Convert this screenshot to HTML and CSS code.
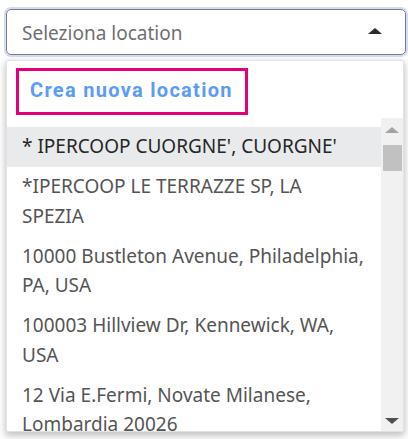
FILE: index.html
```html
<!DOCTYPE html>
<html lang="it">
<head>
  <meta charset="UTF-8" />
  <meta name="viewport" content="width=device-width, initial-scale=1.0" />
  <title>Seleziona location</title>
  <link rel="stylesheet" href="styles.css">
</head>
<body>
  <div class="picker">
    <div class="select">
      <span class="placeholder">Seleziona location</span>
      <span class="caret"></span>
    </div>

    <div class="dropdown">
      <div class="dropdown-head">
        <a class="create-link" href="#">Crea nuova location</a>
      </div>
      <div class="dropdown-body">
        <ul class="options">
          <li class="active">* IPERCOOP CUORGNE', CUORGNE'</li>
          <li>*IPERCOOP LE TERRAZZE SP, LA SPEZIA</li>
          <li>10000 Bustleton Avenue, Philadelphia, PA, USA</li>
          <li>100003 Hillview Dr, Kennewick, WA, USA</li>
          <li>12 Via E.Fermi, Novate Milanese, Lombardia 20026</li>
        </ul>
        <div class="scrollbar">
          <span class="sb-btn"><span class="sb-up"></span></span>
          <span class="sb-thumb"></span>
          <span class="sb-fill"></span>
          <span class="sb-btn"><span class="sb-down"></span></span>
        </div>
      </div>
    </div>
  </div>
</body>
</html>
```

FILE: styles.css
```css
* { box-sizing: border-box; margin: 0; padding: 0; }
html, body { height: 100%; }
body { background: #ffffff; font-family: 'Noto Sans', 'Open Sans', sans-serif; overflow: hidden; }

.picker { padding: 9px 2px 0 6px; }

.select {
  height: 46px; border: 1px solid #7d7d7d; border-radius: 5px;
  display: flex; align-items: center; justify-content: space-between;
  padding: 1px 23px 0 15px;
  box-shadow: 0 0 0 2px #cfdcfa;
}
.placeholder { color: #6f6f6f; font-size: 19px; }
.caret {
  width: 0; height: 0; margin-bottom: 3px;
  border-left: 7px solid transparent; border-right: 7px solid transparent;
  border-bottom: 6px solid #2b2b2b;
}

.dropdown {
  margin-top: 5px; width: 398px; height: 372px;
  background: #fff; border: 1px solid #e2e2e2; border-radius: 2px;
  box-shadow: 0 3px 7px 1px rgba(0, 0, 0, 0.24);
  display: flex; flex-direction: column;
}

.dropdown-head { height: 57px; padding: 7px 0 0 9px; }
.create-link {
  display: inline-flex; align-items: center;
  width: 232px; height: 47px; padding: 0 0 3px 11px;
  border: 3px solid #e4007c;
  color: #5b9cf7; text-decoration: none;
  font-family: Roboto, sans-serif; font-weight: 700; font-size: 20px; letter-spacing: 1.3px;
}

.dropdown-body { flex: 1; display: flex; min-height: 0; }

.options { flex: 1; list-style: none; overflow: hidden; padding-top: 9px; }
.options li {
  padding: 5px 17px 5.5px 15px;
  font-size: 19px; line-height: 29.5px; color: #555555;
}
.options li.active { background: #e9eaec; color: #262626; }

.scrollbar { width: 22px; background: #f1f1f1; display: flex; flex-direction: column; }
.sb-btn { height: 24px; display: flex; align-items: center; justify-content: center; }
.sb-up { border-left: 7px solid transparent; border-right: 7px solid transparent; border-bottom: 6px solid #a3a3a3; }
.sb-down { border-left: 7px solid transparent; border-right: 7px solid transparent; border-top: 6px solid #505050; margin-top: 4px; }
.sb-thumb { height: 26px; margin: 3px 1px 0 2px; background: #c1c1c1; }
.sb-fill { flex: 1; }
```
